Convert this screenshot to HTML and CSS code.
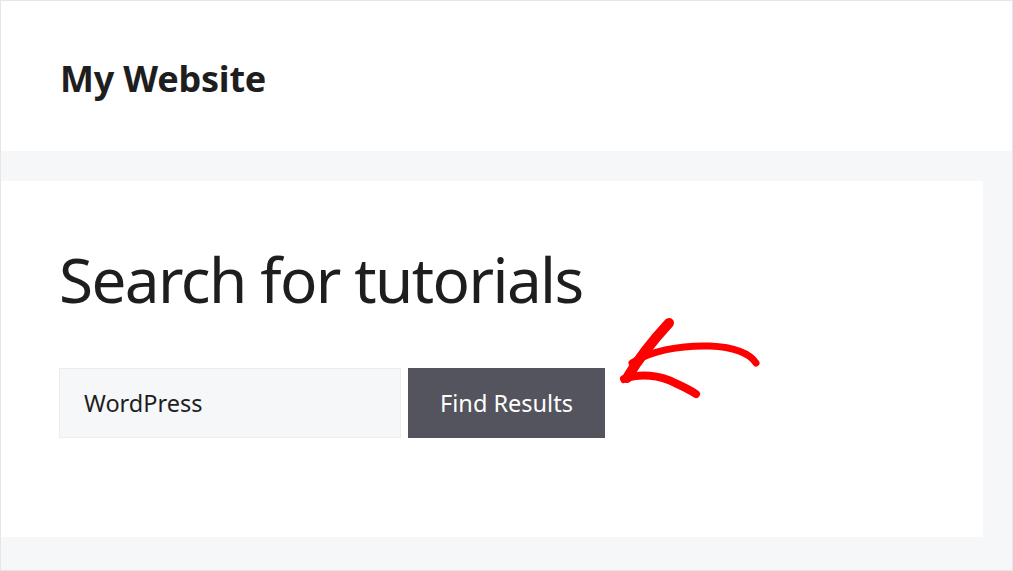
FILE: index.html
```html
<!DOCTYPE html>
<html lang="en">
<head>
    <meta charset="UTF-8">
    <meta name="viewport" content="width=device-width, initial-scale=1.0">
    <title>My Website</title>
    <link rel="stylesheet" href="styles.css">
</head>
<body>
    <div class="page">
        <header class="site-header">
            <div class="site-title">My Website</div>
        </header>

        <main class="site-main">
            <section class="card">
                <h1 class="card-title">Search for tutorials</h1>
                <form class="search-form" onsubmit="return false;">
                    <input type="text" class="search-input" value="WordPress">
                    <button type="submit" class="search-button">Find Results</button>
                </form>

                <!-- hand drawn pointer -->
                <svg class="pointer" width="160" height="100" viewBox="0 0 160 100">
                    <path d="M69 22 C 56 36, 40 55, 27 77" fill="none" stroke="#ff0000" stroke-width="10" stroke-linecap="round"/>
                    <path d="M32 62 C 50 50, 80 44, 110 45 C 130 46, 148 50, 156 62" fill="none" stroke="#ff0000" stroke-width="7" stroke-linecap="round"/>
                    <path d="M24 78 C 40 72, 60 74, 75 82 C 84 86, 90 89, 96 93" fill="none" stroke="#ff0000" stroke-width="8" stroke-linecap="round"/>
                </svg>
            </section>
        </main>
    </div>
</body>
</html>
```

FILE: styles.css
```css
html, body {
    margin: 0;
    padding: 0;
}

body {
    font-family: 'Noto Sans', 'Open Sans', sans-serif;
    color: #1e1e1e;
    background: #fff;
}

.page {
    width: 1013px;
    height: 571px;
    box-sizing: border-box;
    border: 1px solid #e6e6e6;
    display: flex;
    flex-direction: column;
}

.site-header {
    height: 150px;
    box-sizing: border-box;
    padding: 4px 0 0 59px;
    display: flex;
    align-items: center;
    background: #fff;
}

.site-title {
    font-size: 36px;
    font-weight: 700;
    letter-spacing: -0.2px;
}

.site-main {
    flex: 1;
    background: #f6f7f9;
    padding: 30px 29px 33px 0;
    display: flex;
}

.card {
    flex: 1;
    position: relative;
    background: #fff;
    padding: 62px 0 0 58px;
}

.card-title {
    margin: 0 0 53px;
    font-size: 62px;
    font-weight: 400;
    line-height: 72px;
    letter-spacing: -1.6px;
}

.search-form {
    display: flex;
    gap: 7px;
}

.search-input {
    width: 342px;
    height: 70px;
    box-sizing: border-box;
    border: 1px solid #ececec;
    background: #f6f7f9;
    padding: 0 24px;
    font-family: inherit;
    font-size: 23.5px;
    color: #1e1e1e;
    outline: none;
}

.search-button {
    width: 197px;
    height: 70px;
    border: none;
    background: #54545e;
    color: #fff;
    font-family: inherit;
    font-size: 23.5px;
    cursor: pointer;
}

.pointer {
    position: absolute;
    left: 599px;
    top: 120px;
}
```
